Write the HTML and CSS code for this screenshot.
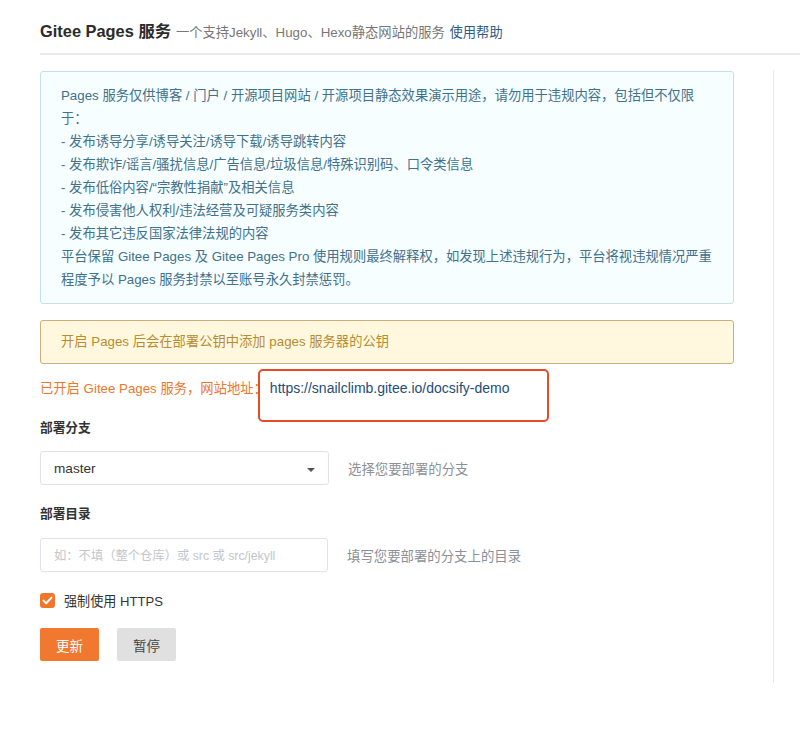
FILE: index.html
```html
<!DOCTYPE html>
<html lang="zh-CN">
<head>
<meta charset="utf-8">
<title>Gitee Pages 服务</title>
<link rel="stylesheet" href="styles.css">
</head>
<body>
<div class="page">
  <div class="header">
    <span class="title">Gitee Pages 服务</span>
    <span class="subtitle">一个支持Jekyll、Hugo、Hexo静态网站的服务</span>
    <a class="help">使用帮助</a>
  </div>
  <div class="layout">
    <div class="main">
      <div class="notice">
        <p>Pages 服务仅供博客 / 门户 / 开源项目网站 / 开源项目静态效果演示用途，请勿用于违规内容，包括但不仅限于：</p>
        <p>- 发布诱导分享/诱导关注/诱导下载/诱导跳转内容</p>
        <p>- 发布欺诈/谣言/骚扰信息/广告信息/垃圾信息/特殊识别码、口令类信息</p>
        <p>- 发布低俗内容/“宗教性捐献”及相关信息</p>
        <p>- 发布侵害他人权利/违法经营及可疑服务类内容</p>
        <p>- 发布其它违反国家法律法规的内容</p>
        <p>平台保留 Gitee Pages 及 Gitee Pages Pro 使用规则最终解释权，如发现上述违规行为，平台将视违规情况严重程度予以 Pages 服务封禁以至账号永久封禁惩罚。</p>
      </div>
      <div class="warning">开启 Pages 后会在部署公钥中添加 pages 服务器的公钥</div>
      <div class="status">已开启 Gitee Pages 服务，网站地址：<a class="site-link">https://snailclimb.gitee.io/docsify-demo</a></div>
      <div class="field">
        <div class="label">部署分支</div>
        <div class="control-row">
          <div class="select"><span>master</span><i class="caret"></i></div>
          <span class="hint">选择您要部署的分支</span>
        </div>
      </div>
      <div class="field">
        <div class="label">部署目录</div>
        <div class="control-row">
          <div class="input"><span class="placeholder">如：不填（整个仓库）或 src 或 src/jekyll</span></div>
          <span class="hint">填写您要部署的分支上的目录</span>
        </div>
      </div>
      <label class="check-row">
        <span class="checkbox"><svg width="11" height="9" viewBox="0 0 11 9"><path d="M1.5 4.6 L4.2 7.2 L9.5 1.6" fill="none" stroke="#fff" stroke-width="2" stroke-linecap="round" stroke-linejoin="round"/></svg></span>
        <span class="check-label">强制使用 HTTPS</span>
      </label>
      <div class="buttons">
        <button class="btn btn-primary">更新</button>
        <button class="btn btn-default">暂停</button>
      </div>
    </div>
    <div class="aside"></div>
  </div>
</div>
</body>
</html>
```
FILE: styles.css
```css
* { box-sizing: border-box; }
html, body { margin: 0; padding: 0; background: #fff; }
body {
  font-family: "Liberation Sans", "Noto Sans CJK SC", sans-serif;
  color: #333;
  font-size: 13.3px;
}
.page { padding-left: 40px; }
.header {
  height: 55px;
  padding: 20px 0 0;
  line-height: 22px;
  border-bottom: 2px solid #ebebeb;
  white-space: nowrap;
  overflow: hidden;
}
.title {
  font-size: 16.4px;
  font-weight: 700;
  color: #2b2b2b;
}
.subtitle {
  font-size: 13.3px;
  color: #777;
  margin-left: 1px;
}
.help {
  font-size: 13.3px;
  color: #2e5a87;
  margin-left: 1px;
}
.layout {
  display: flex;
  gap: 39px;
}
.main {
  width: 694px;
  padding-top: 16px;
}
.aside {
  margin-top: 15px;
  width: 1px;
  height: 613px;
  border-left: 1px solid #e8e8e8;
}
.notice {
  background: #f6feff;
  border: 1px solid #c3e0e6;
  border-radius: 3px;
  padding: 12px 16px 12px 20px;
  color: #41718c;
  line-height: 23px;
  font-size: 13.3px;
}
.notice p { margin: 0; }
.warning {
  margin-top: 16px;
  background: #fff8df;
  border: 1px solid #c9b07a;
  border-radius: 3px;
  padding: 10px 20px;
  line-height: 22px;
  font-size: 13.3px;
  color: #b98b30;
}
.status {
  margin-top: 13px;
  line-height: 22px;
  height: 22px;
  font-size: 13.3px;
  color: #f0762b;
}
.site-link {
  position: relative;
  z-index: 1;
  color: #1e4d78;
  font-size: 14px;
  margin-left: 3px;
}
.site-link::before {
  content: "";
  position: absolute;
  z-index: -1;
  left: -12px;
  top: -11px;
  width: 287px;
  height: 49px;
  background: #fff;
  border: 2.5px solid #ea4b26;
  border-radius: 5px;
}
.field { margin-top: 19px; }
.label {
  font-size: 12.7px;
  font-weight: 700;
  color: #333;
  line-height: 20px;
}
.control-row {
  margin-top: 13px;
  display: flex;
  align-items: center;
  gap: 19px;
}
.select, .input {
  width: 289px;
  height: 34px;
  border: 1px solid #e1e3e8;
  border-radius: 3px;
  padding: 0 13px;
  display: flex;
  align-items: center;
  justify-content: space-between;
  font-size: 13.6px;
  color: #333;
}
.input { width: 288px; }
.caret {
  width: 0;
  height: 0;
  border-left: 4px solid transparent;
  border-right: 4px solid transparent;
  border-top: 4px solid #555;
  margin-top: 3px;
}
.placeholder {
  font-size: 12.3px;
  color: #c3c6cc;
  white-space: nowrap;
}
.hint {
  font-size: 13.4px;
  color: #8c9099;
}
.field + .field .control-row { margin-top: 14px; }
.check-row {
  margin-top: 18px;
  display: flex;
  align-items: center;
  gap: 9px;
  height: 20px;
}
.checkbox {
  width: 15px;
  height: 15px;
  border-radius: 3px;
  background: #f0762b;
  display: flex;
  align-items: center;
  justify-content: center;
}
.check-label { color: #333; font-size: 13.1px; }
.buttons {
  margin-top: 18px;
  display: flex;
  gap: 18px;
}
.btn {
  width: 59px;
  height: 33px;
  border: none;
  border-radius: 2px;
  font-family: inherit;
  font-size: 13.5px;
  padding: 0;
}
.btn-primary { background: #f0782f; color: #fff; }
.btn-default { background: #e0e0e0; color: #444; }
```
